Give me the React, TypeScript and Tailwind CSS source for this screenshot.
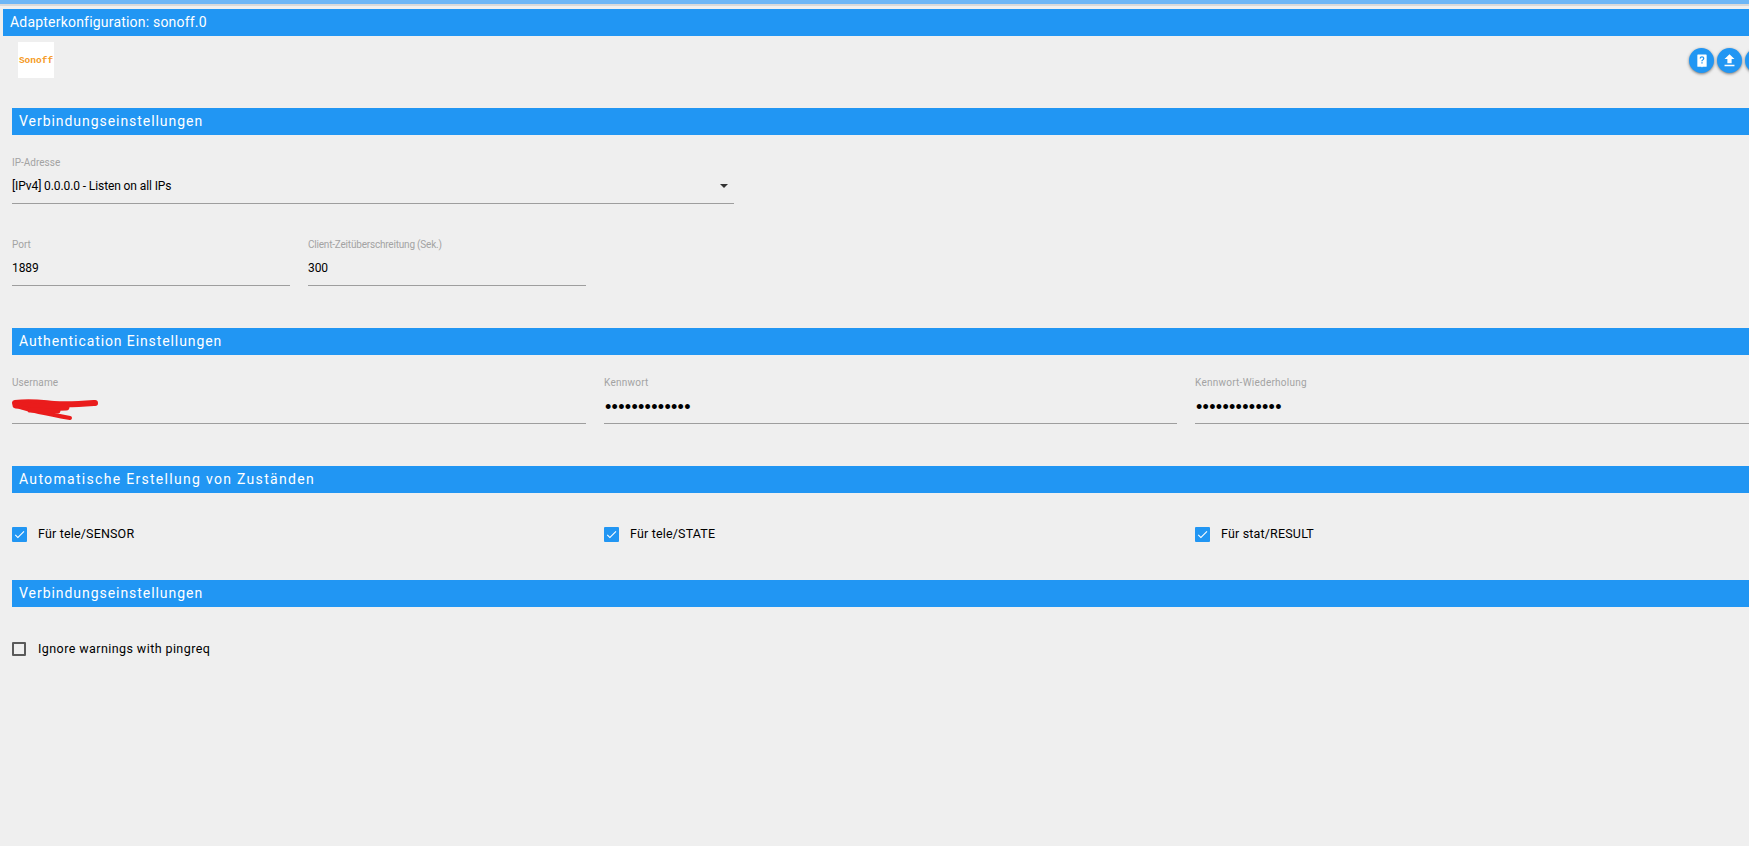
import { MdCheck, MdFileUpload } from 'react-icons/md'

const font = { fontFamily: 'Roboto, "Noto Sans", sans-serif' }

function SectionBar({ title, className }: { title: string; className: string }) {
  return (
    <div className={`ml-3 flex h-[27px] items-center bg-[#2196f3] pl-[7px] text-[14px] text-white ${className}`}>
      {title}
    </div>
  )
}

function Field({ label, value, className, labelClass, dots }: { label: string; value?: string; className?: string; labelClass?: string; dots?: boolean }) {
  return (
    <div className={`h-[52px] border-b border-[#9e9e9e] ${className ?? ''}`}>
      <div className={`h-[26px] pt-[4px] text-[10px] leading-[14px] text-[#a3a3a3] ${labelClass ?? ''}`}>{label}</div>
      {dots ? (
        <div className="h-[20px] overflow-hidden pl-[1px] font-['Liberation_Sans'] text-[18px] leading-[19px] tracking-[0.3px] text-black">•••••••••••••</div>
      ) : (
        <div className="text-[12px] leading-[17px] tracking-[-0.1px] text-black">{value}</div>
      )}
    </div>
  )
}

function CheckItem({ label, checked }: { label: string; checked?: boolean }) {
  return (
    <div className="flex h-[15px] items-center text-[12.5px] text-black">
      {checked ? (
        <span className="flex h-[15px] w-[15px] items-center justify-center rounded-[1px] bg-[#2196f3]">
          <MdCheck className="h-[13px] w-[13px] text-white" />
        </span>
      ) : (
        <span className="h-[14px] w-[14px] rounded-[1px] border-2 border-[#5a5a5a]" />
      )}
      {checked ? (
        <span className="ml-[11px] tracking-[0.17px]">{label}</span>
      ) : (
        <span className="ml-[12px] pt-[1px] tracking-[0.42px]">{label}</span>
      )}
    </div>
  )
}

function RoundButton({ children }: { children?: React.ReactNode }) {
  return (
    <button className="flex h-[25px] w-[25px] shrink-0 items-center justify-center rounded-full bg-[#2196f3] text-white shadow-[0_1px_3px_rgba(0,0,0,0.5)]">
      {children}
    </button>
  )
}

export default function App() {
  return (
    <div className="h-[846px] w-[1749px] overflow-hidden bg-[#efefef]" style={font}>
      {/* top strip */}
      <div className="h-1 bg-[#6db6f6]" />
      <div className="h-[2px] bg-[#d9d9d9]" />

      <div className="ml-[3px] mt-[3px] flex h-[27px] items-center bg-[#2196f3] pl-[7px] text-[14px] tracking-[0.2px] text-white">
        Adapterkonfiguration: sonoff.0
      </div>

      {/* logo + action buttons */}
      <div className="mt-[6px] flex h-[36px] items-center">
        <div className="ml-[18px] flex h-[36px] w-[36px] items-center justify-center bg-white pt-[2px] font-['Liberation_Mono'] text-[9.5px] font-bold leading-none text-[#f59a23]">
          Sonoff
        </div>
        <div className="ml-auto mr-[-21px] flex gap-[3px] pt-[1px]">
          <RoundButton>
            <svg viewBox="0 0 24 24" className="h-[14px] w-[14px]" fill="currentColor">
              <path
                fillRule="evenodd"
                d="M5 1h14a1 1 0 0 1 1 1v19a1 1 0 0 1-1 1h-6l-1 1-1-1H5a1 1 0 0 1-1-1V2a1 1 0 0 1 1-1zm7 3c-2.300 0-4 1.500-4 3.500h2.200c0-.9.8-1.500 1.800-1.500s1.800.6 1.800 1.500c0 1.800-3 1.700-3 5h2.200c0-2.300 3-2.500 3-5C16 5.500 14.300 4 12 4zm-1.100 10v2.400h2.200V14h-2.200z"
              />
            </svg>
          </RoundButton>
          <RoundButton>
            <MdFileUpload className="h-[17px] w-[17px]" />
          </RoundButton>
          <RoundButton />
        </div>
      </div>

      <SectionBar title="Verbindungseinstellungen" className="mt-[30px] tracking-[0.95px]" />

      <Field
        label="IP-Adresse"
        value="[IPv4] 0.0.0.0 - Listen on all IPs"
        className="ml-3 mt-[17px] w-[722px]"
      />
      <div className="relative">
        <span className="absolute left-[720px] top-[-20px] h-0 w-0 border-x-[4px] border-t-[4px] border-x-transparent border-t-[#333333]" />
      </div>

      <div className="ml-3 mt-[30px] flex gap-[18px]">
        <Field label="Port" value="1889" className="w-[278px]" />
        <Field label="Client-Zeitüberschreitung (Sek.)" value="300" className="w-[278px]" labelClass="tracking-[-0.2px]" />
      </div>

      <SectionBar title="Authentication Einstellungen" className="mt-[42px] tracking-[0.9px]" />

      <div className="ml-3 mt-[17px] grid grid-cols-[574px_573px_1fr] gap-[18px]">
        <div className="relative">
          <Field label="Username" labelClass="tracking-[0.1px]" />
          <svg viewBox="0 0 90 26" className="absolute left-0 top-[25px] h-[26px] w-[90px]" fill="none" stroke="#ea1c1c" strokeLinecap="round" strokeLinejoin="round">
            <path d="M3 6 C20 4 30 6 42 7 C58 8 70 7 83 6" strokeWidth="6" />
            <path d="M4 8 C20 10 36 11 54 10" strokeWidth="7" />
            <path d="M8 10 C20 14 36 17 58 21" strokeWidth="4" />
            <path d="M18 13 L46 14" strokeWidth="5" />
          </svg>
        </div>
        <Field label="Kennwort" labelClass="tracking-[0.25px]" dots />
        <Field label="Kennwort-Wiederholung" labelClass="tracking-[0.25px]" dots />
      </div>

      <SectionBar title="Automatische Erstellung von Zuständen" className="mt-[42px] tracking-[1.3px]" />

      <div className="ml-3 mt-[34px] grid grid-cols-[574px_573px_1fr] gap-[18px]">
        <CheckItem label="Für tele/SENSOR" checked />
        <CheckItem label="Für tele/STATE" checked />
        <CheckItem label="Für stat/RESULT" checked />
      </div>

      <SectionBar title="Verbindungseinstellungen" className="mt-[38px] tracking-[0.95px]" />

      <div className="ml-3 mt-[34px]">
        <CheckItem label="Ignore warnings with pingreq" />
      </div>
    </div>
  )
}
